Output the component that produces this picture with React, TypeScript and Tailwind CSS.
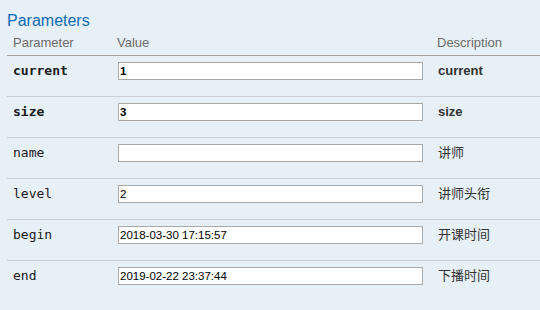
const rows = [
  { name: "current", value: "1", desc: "current", required: true },
  { name: "size", value: "3", desc: "size", required: true },
  { name: "name", value: "", desc: "讲师", required: false },
  { name: "level", value: "2", desc: "讲师头衔", required: false },
  { name: "begin", value: "2018-03-30 17:15:57", desc: "开课时间", required: false },
  { name: "end", value: "2019-02-22 23:37:44", desc: "下播时间", required: false },
];

const sans = "font-['Liberation_Sans','Noto_Sans_CJK_SC',sans-serif]";

export default function App() {
  return (
    <div className={`w-[540px] h-[310px] overflow-hidden bg-[#e7f0f7] pl-[7px] ${sans}`}>
      {/* Heading */}
      <h4 className="pt-[11px] h-[30px] text-[16px] leading-[20px] text-[#0f6ab4]">Parameters</h4>

      {/* Table header */}
      <div className="flex h-[26px] items-center border-b border-[#a3a3a3] text-[13px] text-[#6b6b6b]">
        <div className="w-[110px] pl-[6px]">Parameter</div>
        <div className="w-[320px]">Value</div>
        <div className="flex-1">Description</div>
      </div>

      {/* Rows */}
      {rows.map((r, i) => (
        <div
          key={r.name}
          className={`flex h-[41px] items-start pt-[6px] ${i < rows.length - 1 ? "border-b border-[#c9cfd4]" : ""}`}
        >
          <div
            className={`w-[110px] pl-[6px] leading-[18px] text-[13px] text-[#1a1a1a] font-['DejaVu_Sans_Mono',monospace] ${r.required ? "font-bold" : ""}`}
          >
            {r.name}
          </div>
          <div className="w-[320px] pl-[1px]">
            <input
              readOnly
              value={r.value}
              className={`block w-[305px] h-[18px] border border-[#a9a9a9] bg-white px-[1px] text-[11.5px] text-black outline-none ${sans} ${r.required ? "font-bold" : ""}`}
            />
          </div>
          <div
            className={`flex-1 pl-[1px] leading-[18px] text-[13px] text-[#333] ${r.required ? "font-bold" : ""}`}
          >
            {r.desc}
          </div>
        </div>
      ))}
    </div>
  );
}
